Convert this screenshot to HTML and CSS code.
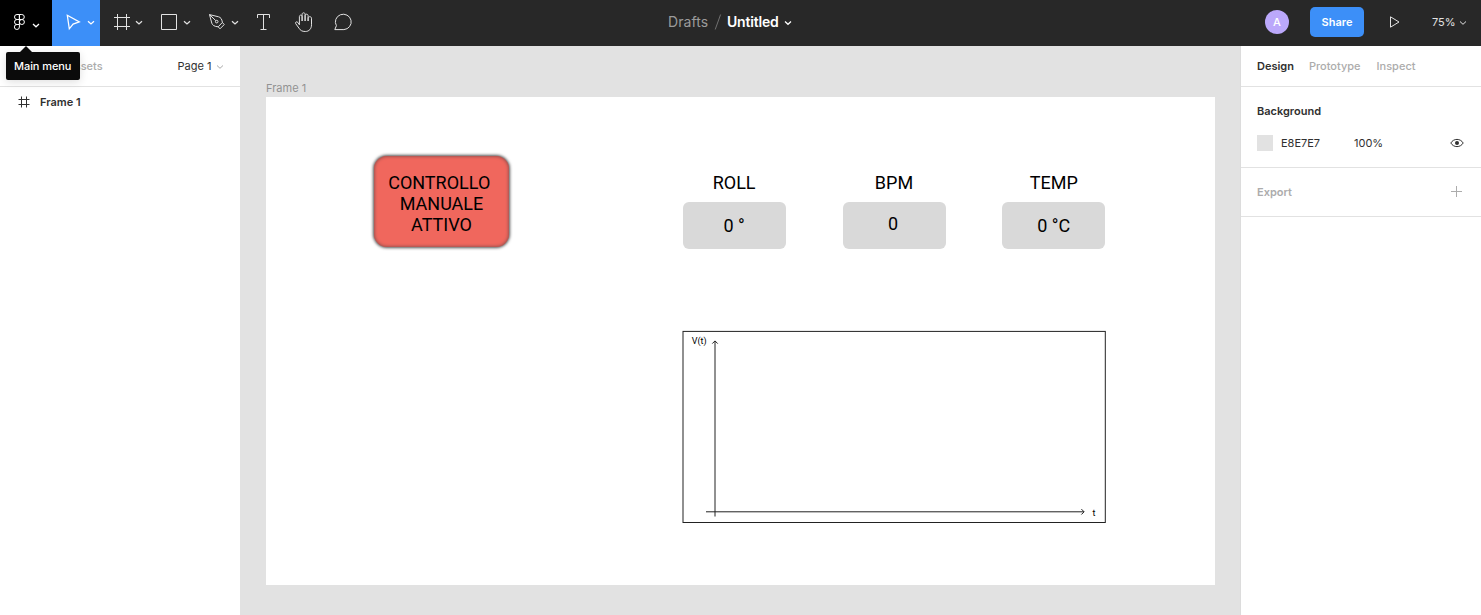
FILE: index.html
```
<!DOCTYPE html>
<html lang="en">
<head>
<meta charset="utf-8">
<title>Untitled</title>
<link rel="stylesheet" href="styles.css">
</head>
<body>
<div class="app">
  <header class="toolbar">
    <div class="tools">
      <div class="tool tool-logo"><svg width="52" height="46" viewBox="0 0 52 46"><path d="M19.4 14.5H17a2.5 2.5 0 0 0 0 5h2.4zM19.4 14.5h2.4a2.5 2.5 0 0 1 0 5h-2.4zM19.4 19.5H17a2.5 2.5 0 0 0 0 5h2.4zM19.4 24.5H17a2.5 2.5 0 1 0 2.4 2.5z"/><circle cx="21.9" cy="22" r="2.5"/><path class="bright" d="M33 24l3 2.8 3-2.8"/></svg></div>
      <div class="tool tool-active"><svg width="48" height="46" viewBox="52 0 48 46"><path class="bright" d="M67.3 15.3l12 6.6-6.2 2.2-3.8 4.7z"/><path class="bright" d="M88 21.2l3 2.8 3-2.8"/></svg></div>
      <div class="tool"><svg width="48" height="46" viewBox="100 0 48 46"><path d="M117.5 14v16M126.5 14v16M114 17.5h16M114 26.5h16"/><path class="bright" d="M136 21.2l3 2.8 3-2.8"/></svg></div>
      <div class="tool"><svg width="48" height="46" viewBox="148 0 48 46"><path d="M161.5 14.5h15v15h-15z"/><path class="bright" d="M184 21.2l3 2.8 3-2.8"/></svg></div>
      <div class="tool"><svg width="48" height="46" viewBox="196 0 48 46"><path d="M209.5 14.6l2.3 8.6c.5 1.8 2.5 3.4 6.4 3.6l4.2-4.4c-.5-3.5-1.8-5-3.8-5.6zM209.5 14.6l6.3 6.1M218.2 26.8l1.8 2 4.2-4.2-1.8-2.2"/><circle cx="216.7" cy="21.6" r="1.3"/><path class="bright" d="M232 21.2l3 2.8 3-2.8"/></svg></div>
      <div class="tool tool-small"><svg width="40" height="46" viewBox="244 0 40 46"><path d="M257.5 18v-3.5h12V18M263.5 14.5v15M260.5 29.5h6"/></svg></div>
      <div class="tool tool-small"><svg width="40" height="46" viewBox="284 0 40 46"><path d="M299.4 24.8v-8.2c0-2 2.7-2 2.7 0V21v-6.7c0-2 3-2 3 0V21v-5.3c0-2 3-2 3 0V21v-2.8c0-2 3.4-2 3.4 0v6.6c0 4-2.4 6.7-6.2 6.7-3.3 0-4.8-1-6.3-3.3l-3.3-4.6c-.8-1.6 1.2-2.5 2.2-1.1z"/></svg></div>
      <div class="tool tool-small"><svg width="40" height="46" viewBox="324 0 40 46"><path d="M334.8 29.6l1.6-3.9a7.9 7.7 0 1 1 7.5 3.9z"/></svg></div>
    </div>
    <div class="title"><span class="folder">Drafts</span><svg class="slash" width="8" height="18" viewBox="0 0 8 18"><path d="M1.2 16.5l5.4-15"/></svg><span class="file">Untitled</span><svg class="title-arrow bright" width="8" height="6" viewBox="0 0 8 6"><path d="M1 1.5l3 2.8 3-2.8"/></svg></div>
    <div class="actions">
      <span class="avatar">A</span>
      <button class="share">Share</button>
      <svg class="play" width="12" height="14" viewBox="0 0 12 14"><path d="M1.5 1.8v10.4L10 7z"/></svg>
      <span class="zoom">75%</span>
      <svg class="zoom-arrow" width="8" height="6" viewBox="0 0 8 6"><path d="M1 1.5l3 2.8 3-2.8"/></svg>
    </div>
    <div class="tooltip">Main menu</div>
  </header>
  <div class="workspace">
    <aside class="layers">
      <div class="tabs tabs-left"><span class="muted assets">Assets</span><span class="page">Page 1</span><svg class="page-arrow" width="8" height="6" viewBox="0 0 8 6"><path d="M1 1.5l3 2.8 3-2.8"/></svg></div>
      <div class="layer"><svg width="12" height="12" viewBox="0 0 12 12"><path d="M3.5 0.5v11M8.5 .5v11M.5 3.5h11M.5 8.5h11"/></svg><span>Frame 1</span></div>
    </aside>
    <main class="canvas">
      <div class="frame-label">Frame 1</div>
      <div class="frame">
        <div class="control"><span class="control-first">CONTROLLO</span><br>MANUALE<br>ATTIVO</div>
        <div class="metric metric-roll"><div class="metric-name">ROLL</div><div class="metric-value">0 °</div></div>
        <div class="metric metric-bpm"><div class="metric-name">BPM</div><div class="metric-value">0</div></div>
        <div class="metric metric-temp"><div class="metric-name">TEMP</div><div class="metric-value">0 °C</div></div>
        <svg class="chart" width="424" height="193" viewBox="682 330 424 193">
          <rect x="683" y="331.4" width="422.3" height="191.1"/>
          <path d="M715 516.5V341M712.3 343.6l2.7-2.7 2.7 2.7M706 511.8h378M1081.4 509.1l2.7 2.7-2.7 2.7"/>
          <text x="691.7" y="344">V(t)</text><text x="1092.5" y="515.7">t</text>
        </svg>
      </div>
    </main>
    <aside class="inspector">
      <div class="tabs"><span class="strong">Design</span><span class="muted">Prototype</span><span class="muted inspect">Inspect</span></div>
      <section class="background">
        <div class="strong">Background</div>
        <div class="color-row"><span class="swatch"></span><span class="hex">E8E7E7</span><span>100%</span><svg class="eye" width="14" height="10" viewBox="0 0 14 10"><path d="M.8 5C3.6.2 10.4.2 13.2 5 10.4 9.8 3.6 9.8.8 5z"/><circle cx="7" cy="5" r="2"/></svg></div>
      </section>
      <section class="export"><span>Export</span><svg width="12" height="12" viewBox="0 0 12 12"><path d="M5.5 0v11M0 5.5h11"/></svg></section>
    </aside>
  </div>
</div>
</body>
</html>
```
FILE: styles.css
```
* { box-sizing: border-box; }
body { margin: 0; font: 11px/16px Inter, sans-serif; letter-spacing: 0; color: #303030; }
svg { display: block; fill: none; stroke: currentColor; flex: none; }
.bright { stroke-width: 1.25; }
.app { width: 1481px; height: 615px; display: flex; flex-direction: column; overflow: hidden; }
.toolbar { height: 46px; flex: none; background: #282828; color: #e2e2e2; display: flex; justify-content: space-between; position: relative; }
.tools { display: flex; width: 668px; }
.tool { width: 48px; height: 46px; }
.tool-small { width: 40px; }
.tool-logo { width: 52px; background: #000; color: #fff; }
.tool-active { background: #3c8ff8; color: #fff; }
.title { display: flex; align-items: center; font-size: 14px; height: 44px; flex: 1; letter-spacing: 0; }
.folder { color: #9b9b9b; width: 41px; letter-spacing: .05px; }
.slash { margin: 0 5px; color: #707070; }
.file { color: #fff; font-weight: 600; width: 52px; letter-spacing: -.2px; white-space: nowrap; }
.title-arrow { color: #fff; margin: 2px 0 0 5px; }
.actions { display: flex; align-items: center; width: 216px; height: 44px; }
.avatar { width: 24px; height: 24px; border-radius: 50%; background: #bba8fb; color: #fff; display: grid; place-items: center; font-weight: 500; }
.share { width: 54px; height: 30px; margin: 0 0 0 21px; padding: 0; border: 0; border-radius: 5px; background: #3c8ff8; color: #fff; font: 600 11px/16px Inter, sans-serif; }
.play { margin-left: 25px; }
.zoom { margin-left: 31px; width: 24px; }
.zoom-arrow { margin: 2px 0 0 3px; }
.tooltip { position: absolute; z-index: 2; left: 6px; top: 52px; width: 74px; height: 28px; padding: 6px 8px; border-radius: 2px; background: #0b0b0b; color: #fff; white-space: nowrap; font-weight: 500; letter-spacing: -.08px; box-shadow: 0 2px 8px #0002; }
.tooltip::before { content: ""; position: absolute; left: 14px; top: -6px; border: 6px solid transparent; border-top: 0; border-bottom-color: #0b0b0b; }
.workspace { display: flex; flex: 1; min-height: 0; }
.layers, .inspector { background: #fff; flex: none; }
.layers { width: 240px; }
.inspector { width: 241px; border-left: 1px solid #dcdcdc; }
.tabs { display: flex; gap: 15px; height: 41px; padding: 12px 16px; border-bottom: 1px solid #e2e2e2; }
.tabs-left { padding-left: 67px; gap: 0; }
.assets { width: 110.5px; }
.page { width: 34.5px; }
.page-arrow { margin: 6px 0 0 4px; color: #aaa; }
.muted, .export { color: #acacac; font-weight: 500; }
.inspect { margin-left: 1px; }
.strong, .layer span { font-weight: 600; }
.layer { display: flex; align-items: center; gap: 10px; height: 30px; padding-left: 18px; }
.canvas { position: relative; flex: 1; background: #e2e2e2; overflow: hidden; }
.frame-label { position: absolute; left: 26px; top: 34px; color: #929292; }
.frame { position: absolute; left: 26px; top: 50.5px; width: 949px; height: 488.5px; background: #fff; color: #000; font: 18px/21px Roboto, sans-serif; letter-spacing: 0; }
.control { position: absolute; left: 108px; top: 59.5px; width: 135px; height: 91px; padding-top: 16px; border-radius: 13px; background: #f0675d; text-align: center; box-shadow: 0 0 3px 1px #555, inset 0 0 3px 1px #a0524f; }
.control-first { margin-right: 4.5px; }
.metric { position: absolute; top: 75.5px; width: 103px; text-align: center; }
.metric-roll { left: 416.6px; }
.metric-bpm { left: 576.5px; }
.metric-temp { left: 736.3px; }
.metric-value { height: 46.5px; margin-top: 9px; padding-top: 13px; border-radius: 6px; background: #d9d9d9; }
.metric-bpm .metric-value { padding-top: 11px; padding-right: 2px; }
.chart { position: absolute; left: 416px; top: 233.5px; stroke: #222; }
.chart text { fill: #000; stroke: none; font: 9px Roboto, sans-serif; }
.background { height: 81px; padding: 16px; border-bottom: 1px solid #e2e2e2; }
.color-row { display: flex; align-items: center; height: 16px; margin-top: 16px; }
.swatch { width: 16px; height: 16px; margin-right: 8px; background: #e2e2e2; }
.hex { width: 73px; }
.eye { margin-left: auto; margin-right: 1px; }
.eye circle { fill: #303030; stroke: none; }
.export { display: flex; justify-content: space-between; height: 49px; padding: 16px; border-bottom: 1px solid #e2e2e2; font-weight: 600; }
.export svg { margin: 2px 2px 0 0; }
```
